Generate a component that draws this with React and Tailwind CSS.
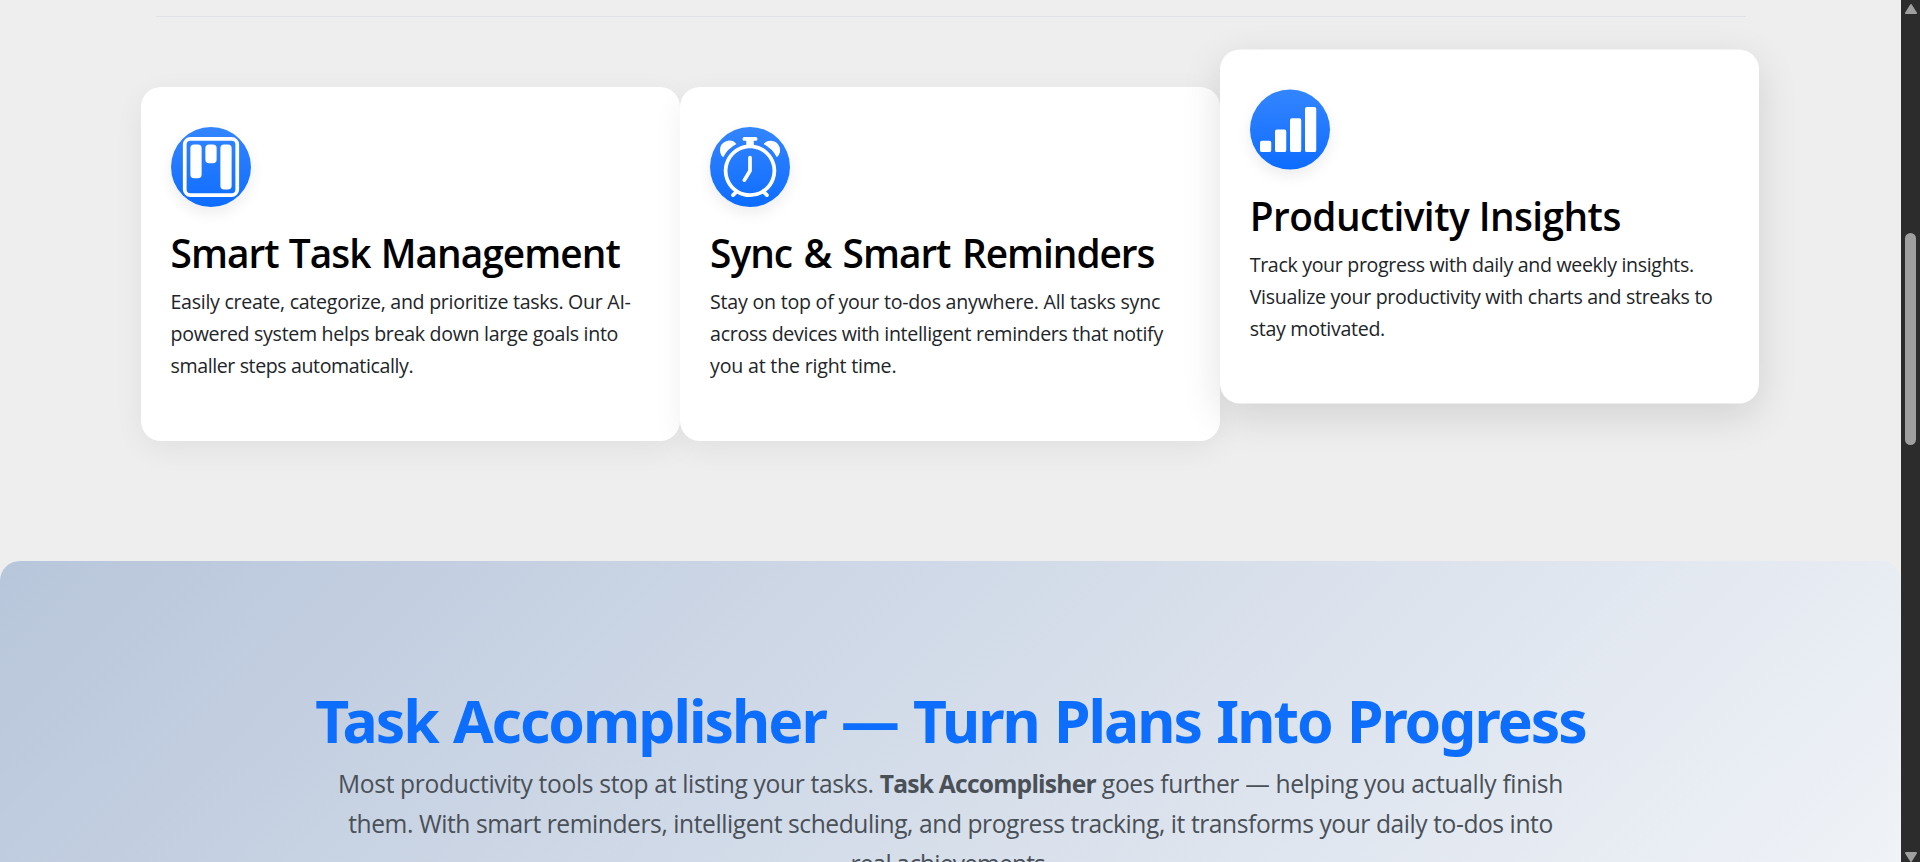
import { BsAlarm, BsKanban, BsReception4 } from "react-icons/bs";

const features = [
  {
    icon: BsKanban,
    title: "Smart Task Management",
    titleClass: "tracking-[-0.95px] [word-spacing:1px]",
    raised: false,
    lines: [
      ["Easily create, categorize, and prioritize tasks. Our AI-", "tracking-[-0.28px]"],
      ["powered system helps break down large goals into", "tracking-[-0.31px]"],
      ["smaller steps automatically.", "tracking-[-0.4px]"],
    ],
  },
  {
    icon: BsAlarm,
    title: "Sync & Smart Reminders",
    titleClass: "tracking-[-1.02px] [word-spacing:2.4px]",
    raised: false,
    lines: [
      ["Stay on top of your to-dos anywhere. All tasks sync", "tracking-[-0.23px]"],
      ["across devices with intelligent reminders that notify", "tracking-[-0.32px]"],
      ["you at the right time.", "tracking-[-0.2px]"],
    ],
  },
  {
    icon: BsReception4,
    title: "Productivity Insights",
    titleClass: "tracking-[-0.56px]",
    raised: true,
    lines: [
      ["Track your progress with daily and weekly insights.", "tracking-[-0.33px]"],
      ["Visualize your productivity with charts and streaks to", "tracking-[-0.32px]"],
      ["stay motivated.", "tracking-[-0.3px]"],
    ],
  },
];

function FeatureCard({ icon: Icon, title, titleClass, lines, raised }) {
  return (
    <article
      className={
        raised
          ? "h-[354px] w-[539.6px] -translate-y-[37.5px] rounded-[20px] bg-white px-[30px] pt-10 shadow-[0_12px_40px_rgba(0,0,0,0.12)]"
          : "h-[354px] w-[539.6px] rounded-[20px] bg-white px-[30px] pt-10 shadow-[0_8px_30px_rgba(0,0,0,0.06)]"
      }
    >
      <div className="flex size-20 items-center justify-center rounded-full bg-linear-to-b from-[#3385ff] to-[#0a6cff] text-white shadow-[0_6px_15px_rgba(0,0,0,0.08)]">
        <Icon className="size-[60px]" />
      </div>
      <h2 className={`mt-[22px] text-[38.8px] leading-[48px] font-semibold whitespace-nowrap text-black ${titleClass}`}>
        {title}
      </h2>
      <p className="mt-[9px] text-[19.6px] leading-8 text-[#212529]">
        {lines.map(([text, tracking]) => (
          <span key={text} className={`block whitespace-nowrap ${tracking}`}>
            {text}
          </span>
        ))}
      </p>
    </article>
  );
}

function Scrollbar() {
  return (
    <div className="flex w-[19px] shrink-0 flex-col items-center bg-[#2c2c2c] pt-1">
      <svg className="h-[10px] w-3" viewBox="0 0 12 10" fill="#9f9f9f">
        <path d="M5.2.6a1 1 0 0 1 1.6 0l5 7.8A1 1 0 0 1 11 10H1a1 1 0 0 1-.8-1.6z" />
      </svg>
      <div className="mt-[219px] h-[212px] w-[11px] rounded-full bg-[#9f9f9f]" />
      <svg className="mt-auto h-[10px] w-3" viewBox="0 0 12 10" fill="#9f9f9f">
        <path d="M5.2 9.4a1 1 0 0 0 1.6 0l5-7.8A1 1 0 0 0 11 0H1a1 1 0 0 0-.8 1.6z" />
      </svg>
    </div>
  );
}

export default function App() {
  return (
    <div className="flex h-[862px] w-[1920px] overflow-hidden bg-[#eeeeee] font-['Open_Sans','Noto_Sans',sans-serif]">
      <main className="flex w-[1901px] flex-col">
        <section className="mx-auto flex h-[561px] w-[1620px] shrink-0 flex-col pt-4">
          <hr className="mx-[15px] border-t border-[#dee2e6]" />
          <div className="mt-[70px] flex">
            {features.map((feature) => (
              <FeatureCard key={feature.title} {...feature} />
            ))}
          </div>
        </section>
        <section className="h-[530px] shrink-0 rounded-[20px] bg-linear-[135deg,#b8c6db,#f5f7fa] pt-[123px] text-center">
          <h1 className="font-['Noto_Sans',sans-serif] text-[58.8px] leading-[72px] font-bold tracking-[-2px] [word-spacing:2px] whitespace-nowrap text-[#0d6efd]">
            Task Accomplisher — Turn Plans Into Progress
          </h1>
          <p className="mt-[7.5px] text-[24.6px] leading-10 text-[#495057]">
            <span className="block tracking-[-0.33px] whitespace-nowrap">
              Most productivity tools stop at listing your tasks.{" "}
              <strong className="font-bold tracking-[-0.78px]">Task Accomplisher</strong> goes further — helping you
              actually finish
            </span>
            <span className="block tracking-[-0.43px] whitespace-nowrap">
              them. With smart reminders, intelligent scheduling, and progress tracking, it transforms your daily to-dos
              into
            </span>
            <span className="block tracking-[-0.85px] whitespace-nowrap">real achievements.</span>
          </p>
        </section>
      </main>
      <Scrollbar />
    </div>
  );
}
